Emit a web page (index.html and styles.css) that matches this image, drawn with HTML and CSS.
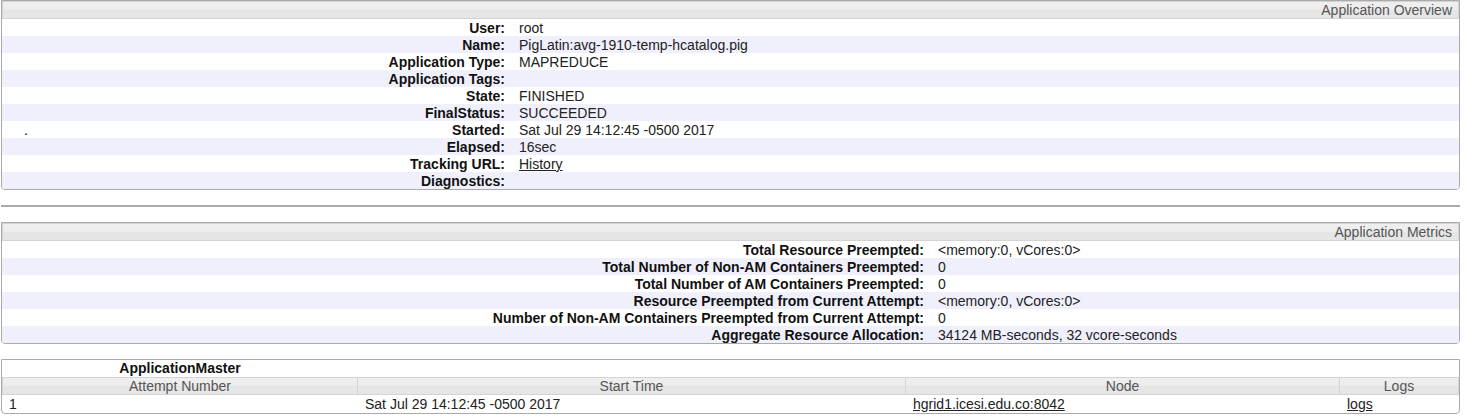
FILE: index.html
```html
<!DOCTYPE html>
<html>
<head>
<meta charset="utf-8">
<title>Application</title>
<link rel="stylesheet" href="styles.css">
</head>
<body>
<div class="page">
  <div class="box">
    <span class="stray">.</span>
    <table class="info overview">
      <colgroup><col class="lab"><col></colgroup>
      <thead>
        <tr><th colspan="2" class="cap">Application Overview</th></tr>
      </thead>
      <tbody>
        <tr><th>User:</th><td>root</td></tr>
        <tr><th>Name:</th><td>PigLatin:avg-1910-temp-hcatalog.pig</td></tr>
        <tr><th>Application Type:</th><td>MAPREDUCE</td></tr>
        <tr><th>Application Tags:</th><td></td></tr>
        <tr><th>State:</th><td>FINISHED</td></tr>
        <tr><th>FinalStatus:</th><td>SUCCEEDED</td></tr>
        <tr><th>Started:</th><td>Sat Jul 29 14:12:45 -0500 2017</td></tr>
        <tr><th>Elapsed:</th><td>16sec</td></tr>
        <tr><th>Tracking URL:</th><td><a href="#">History</a></td></tr>
        <tr><th>Diagnostics:</th><td></td></tr>
      </tbody>
    </table>
  </div>

  <div class="sep"></div>

  <div class="box">
    <table class="info metrics">
      <colgroup><col class="lab"><col></colgroup>
      <thead>
        <tr><th colspan="2" class="cap">Application Metrics</th></tr>
      </thead>
      <tbody>
        <tr><th>Total Resource Preempted:</th><td>&lt;memory:0, vCores:0&gt;</td></tr>
        <tr><th>Total Number of Non-AM Containers Preempted:</th><td>0</td></tr>
        <tr><th>Total Number of AM Containers Preempted:</th><td>0</td></tr>
        <tr><th>Resource Preempted from Current Attempt:</th><td>&lt;memory:0, vCores:0&gt;</td></tr>
        <tr><th>Number of Non-AM Containers Preempted from Current Attempt:</th><td>0</td></tr>
        <tr><th>Aggregate Resource Allocation:</th><td>34124 MB-seconds, 32 vcore-seconds</td></tr>
      </tbody>
    </table>
  </div>

  <div class="box am">
    <table class="attempts">
      <colgroup>
        <col class="c1"><col class="c2"><col class="c3"><col class="c4">
      </colgroup>
      <thead>
        <tr class="title"><th>ApplicationMaster</th><th></th><th></th><th></th></tr>
        <tr class="heads"><th>Attempt Number</th><th>Start Time</th><th>Node</th><th>Logs</th></tr>
      </thead>
      <tbody>
        <tr><td>1</td><td>Sat Jul 29 14:12:45 -0500 2017</td><td><a href="#">hgrid1.icesi.edu.co:8042</a></td><td><a href="#">logs</a></td></tr>
      </tbody>
    </table>
  </div>
</div>
</body>
</html>
```

FILE: styles.css
```css
html, body {
  margin: 0;
  padding: 0;
  background: #fff;
}
body {
  font-family: "Liberation Sans", Arial, sans-serif;
  font-size: 14px;
  color: #222;
}
.page {
  width: 1459px;
  margin-left: 1px;
}
.box {
  position: relative;
  border: 1px solid #aaaaaa;
  border-radius: 0 0 4px 4px;
  overflow: hidden;
}
.stray {
  position: absolute;
  left: 22px;
  top: 121px;
  line-height: 16px;
  color: #000;
}
table {
  border-collapse: separate;
  border-spacing: 0;
  width: 100%;
  table-layout: fixed;
}
.overview col.lab { width: 510px; }
.metrics col.lab { width: 929px; }
.info th.cap {
  height: 16px;
  line-height: 16px;
  padding: 0 6px 0 0;
  text-align: right;
  font-weight: normal;
  color: #555;
  border: 1px solid #d3d3d3;
  background: linear-gradient(to bottom, #efefef 0%, #ececec 50%, #e5e5e5 50%, #e6e6e6 100%);
}
.info tbody tr:nth-child(even) {
  background: #f0f0fc;
}
.info tbody th {
  text-align: right;
  font-weight: bold;
  color: #111;
  height: 16px;
  line-height: 16px;
  padding: 1px 7px 0 0;
  white-space: nowrap;
}
.info tbody td {
  height: 16px;
  line-height: 16px;
  padding: 1px 0 0 7px;
  color: #222;
  white-space: nowrap;
}
a {
  color: #222;
  text-decoration: underline;
}
.box.am { margin-top: 15px; }
.sep {
  height: 2px;
  background: #aaaaaa;
  margin: 15px 0;
}
.attempts col.c1 { width: 356px; }
.attempts col.c2 { width: 548px; }
.attempts col.c3 { width: 434px; }
.attempts col.c4 { width: 119px; }
.attempts tr.title th {
  height: 17px;
  line-height: 17px;
  padding: 0;
  font-weight: bold;
  color: #111;
  text-align: center;
}
.attempts tr.heads th {
  height: 16px;
  line-height: 16px;
  padding: 0;
  font-weight: normal;
  color: #555;
  text-align: center;
  border-top: 1px solid #d3d3d3;
  border-bottom: 1px solid #d3d3d3;
  border-right: 1px solid #d3d3d3;
  background: linear-gradient(to bottom, #efefef 0%, #ececec 50%, #e5e5e5 50%, #e6e6e6 100%);
}
.attempts tr.heads th:first-child {
  border-left: 1px solid #d3d3d3;
}
.attempts tbody td {
  height: 18px;
  line-height: 18px;
  padding: 0 0 0 7px;
  color: #222;
  white-space: nowrap;
}
```
